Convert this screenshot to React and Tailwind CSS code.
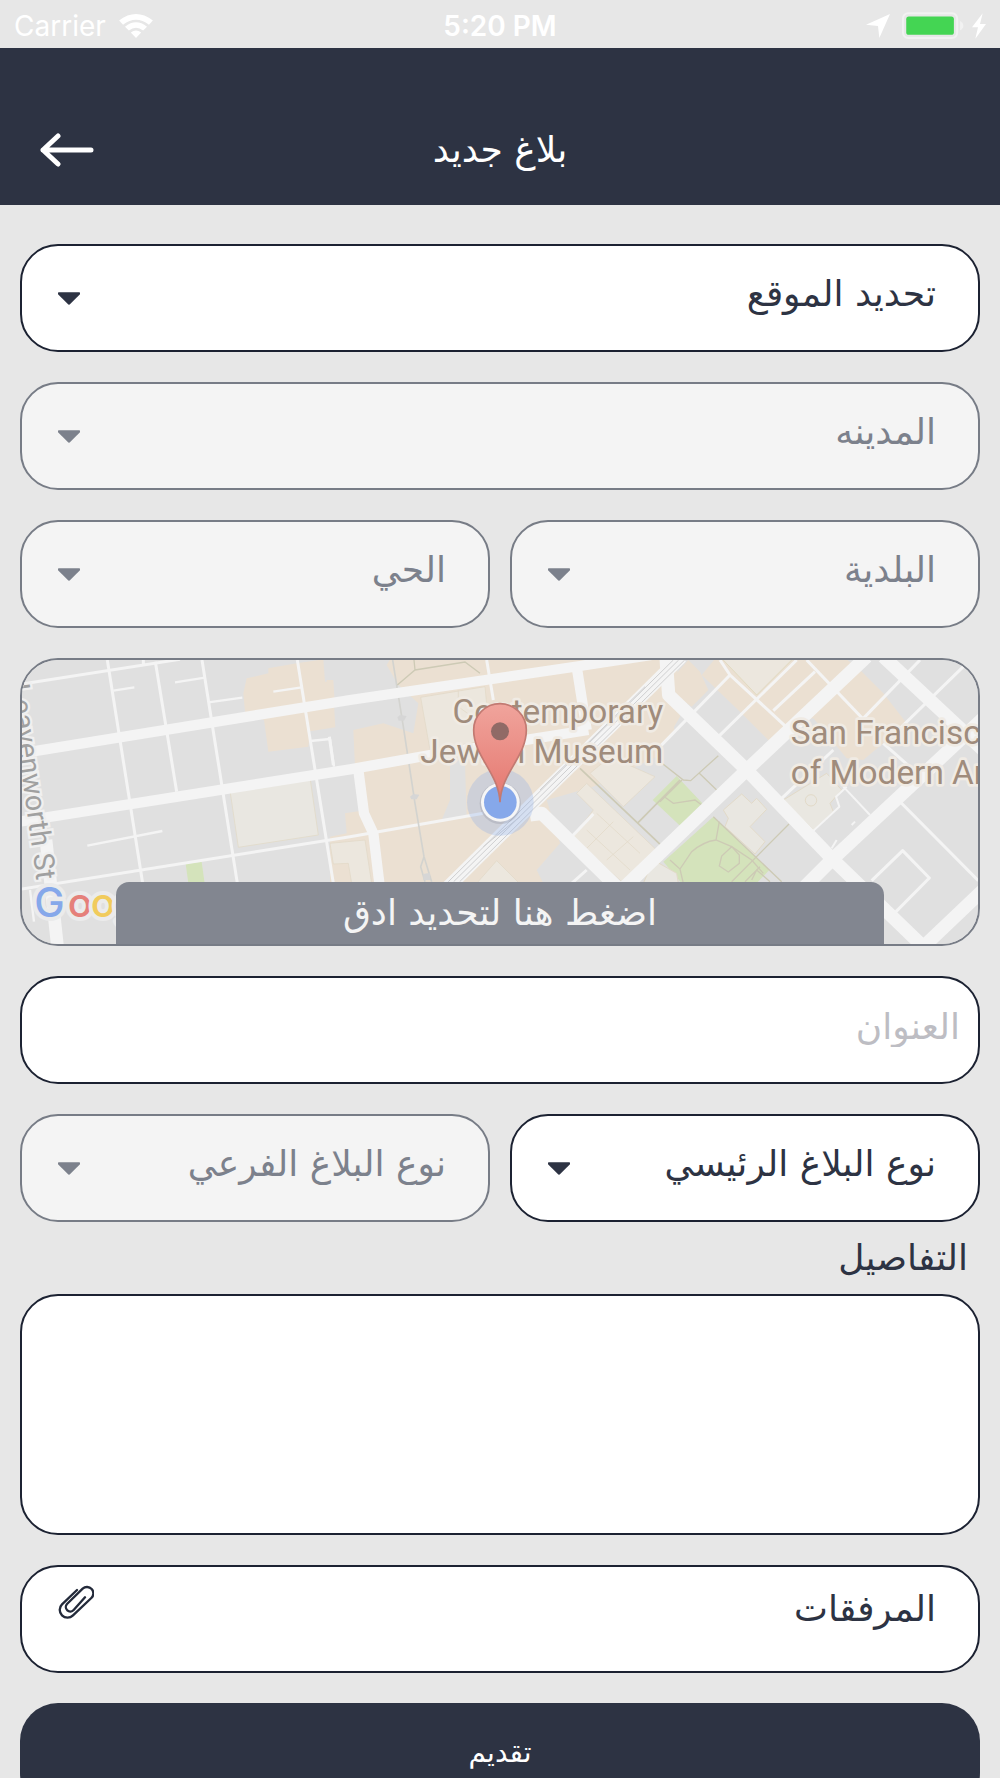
import React, { useState } from 'react';

const fieldBase =
  'w-full rounded-[38px] border-2 text-[36px] font-medium focus:outline-none';

const WifiIcon = () => (
  <svg viewBox="0 0 104 74" className="h-6 w-9" fill="white">
    <path d="M0 20 Q52 -20 104 20 L92 33 Q52 2 12 33 Z" />
    <path d="M18 39 Q52 12 86 39 L74 51 Q52 34 30 51 Z" />
    <path d="M36 57 Q52 44 68 57 L52 74 Z" />
  </svg>
);

const LocationIcon = () => (
  <svg viewBox="0 0 72 72" className="mr-1 size-6" fill="white">
    <path d="M72 0 L40 72 L36 36 L0 32 Z" />
  </svg>
);

const BatteryIcon = () => (
  <svg viewBox="0 0 190 84" className="h-7 w-[62px]">
    <rect x="3" y="3" width="166" height="76" rx="16" fill="none" stroke="#f2f2f2" strokeWidth="6" />
    <rect x="13" y="13" width="146" height="56" rx="8" fill="#44d553" />
    <path d="M178 27 Q188 32 188 41 Q188 50 178 55 Z" fill="#f2f2f2" />
  </svg>
);

const BoltIcon = () => (
  <svg viewBox="0 0 42 76" className="h-[26px] w-[14px]" fill="white">
    <path d="M32 0 L0 42 L18 42 L10 76 L42 32 L24 32 Z" />
  </svg>
);

const BackIcon = () => (
  <svg viewBox="0 0 54 34" className="h-[34px] w-[54px]" fill="none" stroke="white" strokeWidth="5" strokeLinecap="round" strokeLinejoin="round">
    <path d="M18 3 L3 17 L18 31 M3 17 H51" />
  </svg>
);

const CaretIcon = () => (
  <svg viewBox="0 0 66 38" className="h-[13px] w-[22px]" fill="currentColor">
    <path d="M2 0 H64 Q66 0 66 2 V6 L35 37 Q33 38 31 37 L0 6 V2 Q0 0 2 0 Z" />
  </svg>
);

const ClipIcon = () => (
  <svg viewBox="3 7 108 102" className="h-[34px] w-9" fill="none" stroke="#232a3a" strokeWidth="7" strokeLinecap="round" strokeLinejoin="round">
    <path d="M60 22 L15 65 A23 23 0 0 0 48 98 L103 46 A18 18 0 0 0 77 18 L30 64 A13 13 0 0 0 50 82 L84 44" />
  </svg>
);

const SelectField = ({ label, disabled }) => (
  <div
    className={`relative min-w-0 flex-1 ${
      disabled ? 'text-[#7c818c]' : 'text-[#2d3343]'
    }`}
  >
    <select
      aria-label={label}
      disabled={disabled}
      className={`${fieldBase} h-[108px] appearance-none pr-[42px] pb-2 pl-20 disabled:opacity-100 ${
        disabled ? 'border-[#777c86] bg-[#f4f4f4]' : 'border-[#1c2232] bg-white'
      }`}
    >
      <option>{label}</option>
    </select>
    <span className="pointer-events-none absolute inset-y-0 left-[38px] flex items-center">
      <CaretIcon />
    </span>
  </div>
);

const MapView = () => (
  <svg
    viewBox="66 60 2868 852"
    preserveAspectRatio="xMidYMid slice"
    className="absolute inset-0 size-full"
    fontFamily="Roboto, 'Liberation Sans', sans-serif"
  >
    <rect x="0" y="0" width="3000" height="960" fill="#e0e0e0" />

    {/* blocks, west side */}
    <path fill="#ebe0d2" d="M740 115 L805 100 V85 L890 70 L970 58 L975 125 L998 122 L1006 262 L930 274 L925 320 L805 335 L792 240 L735 215 L730 160 Z" />
    <path fill="#e9e7e1" stroke="#e2dccd" strokeWidth="3" d="M690 452 L930 412 L955 585 L715 622 Z" />
    <path fill="#d4e3bb" d="M557 672 L605 665 L614 730 L565 730 Z" />

    {/* blocks, centre */}
    <g transform="translate(990 0)">
      <path fill="#ebe0d2" d="M185 50 H1040 L1050 230 L980 350 L790 440 L650 480 L690 610 L620 690 L640 730 H0 V590 L50 580 L45 520 L110 510 L100 400 L75 380 L70 270 L160 250 L250 280 L265 190 L205 135 L170 75 Z" />
      <path fill="#ebe0d2" d="M-10 120 H10 L15 200 L0 210 Z" />
      <path fill="#e0e0e0" d="M360 350 L405 370 L410 530 L335 540 L360 480 Z" />
      <g fill="#ece7de" stroke="#e1d8c6" strokeWidth="2">
        <path d="M272 172 L465 140 L480 300 L300 330 Z" />
        <path d="M385 152 V200 L440 240" />
        <path d="M0 610 L105 600 L125 730 H65 L55 670 L10 672 Z" />
        <path d="M440 730 L500 662 L568 730 Z" />
        <path d="M780 400 L840 350 L975 410 L880 500 Z" />
        <path d="M740 460 L770 430 L990 640 L890 740 L730 590 L790 510 Z" />
        <path d="M800 520 L930 640 M770 570 L900 690 M770 625 L850 545 M830 660 L910 590" fill="none" />
      </g>
    </g>

    {/* blocks, east side */}
    <g transform="translate(1980 0)">
      <g fill="#ebe0d2">
        <path d="M50 100 L85 60 L120 95 L145 150 L95 200 L40 160 Z" />
        <path d="M125 105 L170 50 H550 L600 90 L670 160 L740 250 L610 360 L560 355 L460 235 L400 240 L330 305 L240 215 Z" />
        <path d="M0 220 H30 L45 275 L0 320 Z" />
      </g>
      <path fill="#ece7de" stroke="#e1dac0" strokeWidth="3" d="M185 55 H400 L290 165 Z" />
      <path fill="#d4e3bb" d="M-22 480 L50 408 L127 490 L60 557 Z M160 530 L328 690 L290 730 H65 L10 665 Z" />
      <g fill="#e9e7e1" stroke="#e2dac8" strokeWidth="3">
        <path d="M190 510 L245 462 L275 490 L290 475 L320 508 L270 560 L315 605 L285 642 L195 560 L205 535 Z" />
        <path d="M370 480 L500 400 L545 450 L510 490 L520 515 L460 570 Z" />
        <circle cx="453" cy="481" r="17" />
        <path d="M-20 660 L50 700 L55 730 H-50 Z" />
      </g>
      <g fill="none" stroke="#cdcab5" strokeWidth="4">
        <path d="M160 530 L365 725 M0 365 L70 420 L92 422 L175 347 M118 400 L170 450 M387 552 L215 725" />
        <path d="M66 420 L0 485 M15 472 L40 490 L105 480 L125 495" />
        <path d="M178 545 L168 600 M30 660 L60 687 L70 730 M60 687 L95 635 Q130 605 168 600 L215 620 L275 660 L310 700" />
        <path d="M215 620 L185 648 L178 678 L205 696 L238 670 V645 Z M255 725 L300 680 M275 720 L290 690 L330 725" />
      </g>
      <g fill="none" stroke="#cdcab5" strokeWidth="5">
        <path d="M-240 385 L10 622" />
        <path d="M-68 550 L60 420" />
      </g>
    </g>

    {/* minor streets */}
    <g fill="none" stroke="#f4f4f4" strokeWidth="9" strokeLinejoin="round">
      <path d="M66 132 L540 58 M430 60 V75" />
      <path d="M60 748 L1050 590 L1450 520" />
      <path d="M322 60 L428 730 M466 65 L530 455 M606 60 L712 730 M892 60 L1000 730" />
      <path strokeWidth="7" d="M340 152 L403 142 M525 127 L615 113 M625 187 L727 173 M820 155 L905 142 M262 617 L487 573 M930 303 L990 297 L1002 380 M90 750 L102 845" />
      <path d="M988 290 L1000 375 M1460 60 L1480 180 M1780 522 L1715 590 M1760 690 L1715 730" />
      <g transform="translate(1980 0)">
        <path d="M180 60 L210 105 L380 262 M410 60 L170 295 M210 105 L0 320 M465 95 L340 212 M440 60 L610 238 M780 60 L610 235 M910 80 L715 270" />
        <path d="M520 330 L365 475 M670 310 L760 390 M715 480 L955 722 M635 722 L728 632 L808 714 L705 818" />
        <path strokeWidth="6" d="M550 440 L630 525 M460 572 L538 500 L528 470 L560 440 M515 625 L530 600 M575 555 L585 545" />
      </g>
    </g>

    {/* light rail tunnels */}
    <g fill="none" stroke="#d3d3cf" strokeWidth="5">
      <path d="M1178 60 L1210 260 L1245 490 L1272 650 L1295 725 M1272 650 L1262 680 L1275 725" />
      <path stroke="#cdcab5" strokeWidth="4" d="M1192 135 L1245 90 L1395 66 L1440 100 M1245 90 L1242 60" />
    </g>
    <path fill="#d6d6d6" d="M1192 232 L1200 225 L1220 228 L1212 242 L1196 242 Z M1230 470 L1240 462 L1258 464 L1250 478 L1234 478 Z M1270 702 L1290 698 V720 H1270 Z" />

    {/* main streets */}
    <g fill="none" stroke="#f4f4f4" strokeWidth="31" strokeLinejoin="round">
      <path d="M95 335 L1050 180 L1740 78 L1960 44" />
      <path d="M60 545 L1050 388 L1290 345 L1765 270" />
      <path d="M1075 390 L1092 520 L1120 580 L1138 730 M1730 80 L1760 270" />
      <path d="M138 600 L172 915" strokeWidth="38" />
      <g strokeWidth="40">
        <path d="M2044 50 L1330 755" />
        <path d="M1998 50 L2006 165 L2240 390 L2500 660 L2780 930" />
        <path d="M1590 525 L1625 520 L1860 750" />
        <path d="M2600 50 L2240 390 L1870 745" />
        <path d="M2650 50 L2960 340 M2960 225 L2500 655 L2410 745 M2960 740 L2760 930" />
      </g>
    </g>
    <g fill="none" stroke="#cfcfd0" strokeWidth="3">
      <path d="M2020 60 L1345 725 M2036 60 L1361 725 M2054 60 L1379 725" />
      <path d="M1935 140 L1620 450 M1560 530 L1450 620" />
    </g>

    {/* labels */}
    <g stroke="#f0ebe4" strokeWidth="16" strokeLinejoin="round" paintOrder="stroke" fill="#a08c7c" fontSize="100">
      <text x="1990" y="248" textAnchor="end">Contemporary</text>
      <text x="1990" y="370" textAnchor="end">Jewish Museum</text>
      <text x="2372" y="312">San Francisco</text>
      <text x="2372" y="433">of Modern Art</text>
    </g>
    <text
      transform="translate(110 722) rotate(82)"
      textAnchor="end"
      fontSize="86"
      fill="#a0a0a0"
      stroke="#f0f0f0"
      strokeWidth="14"
      paintOrder="stroke"
    >
      Leavenworth St
    </text>
    <text
      y="832"
      fontSize="122"
      fontFamily="Inter, sans-serif"
      fontWeight="500"
      stroke="#ebebeb"
      strokeWidth="24"
      strokeLinejoin="round"
      paintOrder="stroke"
    >
      <tspan x="103" fill="#86a8ea">G</tspan>
      <tspan x="203" fill="#e5807a">o</tspan>
      <tspan x="272" fill="#f1cb5c">o</tspan>
      <tspan x="342" fill="#86a8ea">g</tspan>
    </text>

    {/* current position and pin */}
    <circle cx="1501" cy="487" r="100" fill="#86a8ea" opacity="0.28" />
    <circle cx="1501" cy="490" r="62" fill="#8a8f9c" opacity="0.3" />
    <circle cx="1501" cy="487" r="58" fill="#f6f6f6" />
    <circle cx="1501" cy="487" r="49" fill="#86a8ea" />
    <defs>
      <linearGradient id="pin" x1="0" y1="0" x2="0" y2="1">
        <stop offset="0" stopColor="#f0a49c" />
        <stop offset="1" stopColor="#e5776f" />
      </linearGradient>
    </defs>
    <path
      d="M1500 487 C1497 400 1421 350 1421 270 A79 79 0 0 1 1579 270 C1579 350 1503 400 1500 487 Z"
      fill="url(#pin)"
      stroke="#c27a72"
      strokeWidth="5"
    />
    <circle cx="1500" cy="274" r="27" fill="#906a66" />
  </svg>
);

const App = () => {
  const [address, setAddress] = useState('');
  const [details, setDetails] = useState('');

  return (
    <div className="flex h-screen flex-col overflow-hidden bg-[#e7e7e7] font-['DejaVu_Sans',sans-serif] text-[#2d3343]">
      {/* Status bar */}
      <div className="grid h-12 shrink-0 grid-cols-3 items-center px-[14px] pt-[3px] font-['Inter',sans-serif] text-[28px] text-white">
        <div className="flex items-center gap-3">
          <span>Carrier</span>
          <WifiIcon />
        </div>
        <span className="text-center font-semibold">5:20 PM</span>
        <div className="flex items-center justify-end gap-2">
          <LocationIcon />
          <BatteryIcon />
          <BoltIcon />
        </div>
      </div>

      {/* Header */}
      <header className="grid h-[157px] shrink-0 grid-cols-[1fr_auto_1fr] items-end bg-[#2d3343] px-10 pb-8 text-white">
        <button type="button" aria-label="رجوع" className="flex h-[46px] items-center justify-self-start">
          <BackIcon />
        </button>
        <h1 dir="rtl" className="text-[36px] leading-[46px] font-medium">
          بلاغ جديد
        </h1>
      </header>

      <main className="min-h-0 flex-1 overflow-y-auto [scrollbar-width:none]">
        <form dir="rtl" className="px-5 pt-[39px] pb-8" onSubmit={(e) => e.preventDefault()}>
          <div className="flex flex-col gap-[30px]">
            <div className="flex">
              <SelectField label="تحديد الموقع" />
            </div>
            <div className="flex">
              <SelectField label="المدينه" disabled />
            </div>
            <div className="flex gap-5">
              <SelectField label="البلدية" disabled />
              <SelectField label="الحي" disabled />
            </div>

            {/* Map */}
            <div dir="ltr" className="relative flex h-[288px] items-end overflow-hidden rounded-[38px] border-2 border-[#777c86]">
              <MapView />
              <button
                type="button"
                dir="rtl"
                className="relative mx-[94px] h-[62px] flex-1 rounded-t-[13px] bg-[#828690] text-[36px] font-medium text-[#f4f4f4]"
              >
                اضغط هنا لتحديد ادق
              </button>
            </div>

            <input
              type="text"
              aria-label="العنوان"
              placeholder="العنوان"
              value={address}
              onChange={(e) => setAddress(e.target.value)}
              className={`${fieldBase} h-[108px] border-[#1c2232] bg-white px-[18px] pb-2 placeholder:text-[#bdbdc3]`}
            />

            <div className="flex gap-5">
              <SelectField label="نوع البلاغ الرئيسي" />
              <SelectField label="نوع البلاغ الفرعي" disabled />
            </div>
          </div>

          <label htmlFor="details" className="block px-3 text-[36px] leading-[72px] font-medium">
            التفاصيل
          </label>
          <textarea
            id="details"
            value={details}
            onChange={(e) => setDetails(e.target.value)}
            className={`${fieldBase} block h-[241px] resize-none border-[#1c2232] bg-white px-[42px] py-5`}
          />

          <label className={`${fieldBase} mt-[30px] flex h-[108px] items-start justify-between border-[#1c2232] bg-white pt-[18px] pr-[42px] pl-9`}>
            <span className="leading-[48px]">المرفقات</span>
            <ClipIcon />
            <input type="file" multiple className="sr-only" />
          </label>

          <button type="submit" className="mt-[30px] h-[108px] w-full rounded-[38px] bg-[#2d3343] pb-2 text-[28px] text-white">
            تقديم
          </button>
        </form>
      </main>
    </div>
  );
};

export default App;
